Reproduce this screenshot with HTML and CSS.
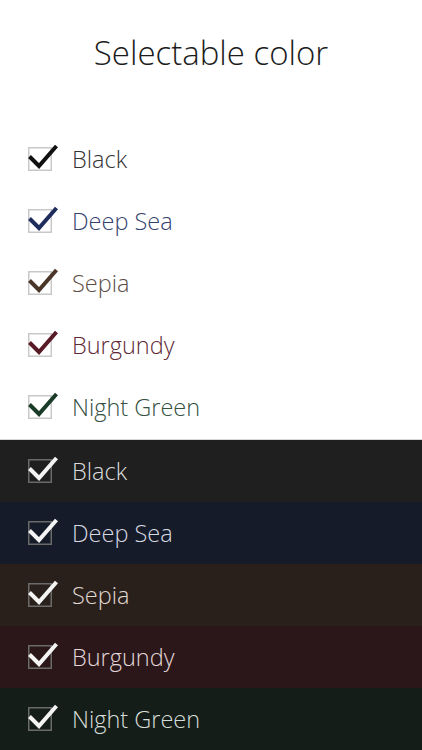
FILE: index.html
```html
<!DOCTYPE html>
<html lang="en">
  <head>
    <meta charset="UTF-8" />
    <meta name="viewport" content="width=device-width, initial-scale=1.0" />
    <title>Selectable color</title>
    <link rel="stylesheet" href="styles.css">
  </head>
  <body>
    <main class="screen">
      <!-- Header -->
      <div class="header">
        <h1>Selectable color</h1>
      </div>

      <!-- Light themes -->
      <ul class="color-list light">
        <li class="row black">
          <svg class="check" viewBox="0 0 30 28" width="30" height="28"><rect x="0.75" y="4.75" width="22.5" height="22.5" /><path d="M1.5 13.5 L11 23 L28.5 3" /></svg>
          <span>Black</span>
        </li>
        <li class="row deep-sea">
          <svg class="check" viewBox="0 0 30 28" width="30" height="28"><rect x="0.75" y="4.75" width="22.5" height="22.5" /><path d="M1.5 13.5 L11 23 L28.5 3" /></svg>
          <span>Deep Sea</span>
        </li>
        <li class="row sepia">
          <svg class="check" viewBox="0 0 30 28" width="30" height="28"><rect x="0.75" y="4.75" width="22.5" height="22.5" /><path d="M1.5 13.5 L11 23 L28.5 3" /></svg>
          <span>Sepia</span>
        </li>
        <li class="row burgundy">
          <svg class="check" viewBox="0 0 30 28" width="30" height="28"><rect x="0.75" y="4.75" width="22.5" height="22.5" /><path d="M1.5 13.5 L11 23 L28.5 3" /></svg>
          <span>Burgundy</span>
        </li>
        <li class="row night-green">
          <svg class="check" viewBox="0 0 30 28" width="30" height="28"><rect x="0.75" y="4.75" width="22.5" height="22.5" /><path d="M1.5 13.5 L11 23 L28.5 3" /></svg>
          <span>Night Green</span>
        </li>
      </ul>

      <!-- Dark themes -->
      <ul class="color-list dark">
        <li class="row black">
          <svg class="check" viewBox="0 0 30 28" width="30" height="28"><rect x="0.75" y="4.75" width="22.5" height="22.5" /><path d="M1.5 13.5 L11 23 L28.5 3" /></svg>
          <span>Black</span>
        </li>
        <li class="row deep-sea">
          <svg class="check" viewBox="0 0 30 28" width="30" height="28"><rect x="0.75" y="4.75" width="22.5" height="22.5" /><path d="M1.5 13.5 L11 23 L28.5 3" /></svg>
          <span>Deep Sea</span>
        </li>
        <li class="row sepia">
          <svg class="check" viewBox="0 0 30 28" width="30" height="28"><rect x="0.75" y="4.75" width="22.5" height="22.5" /><path d="M1.5 13.5 L11 23 L28.5 3" /></svg>
          <span>Sepia</span>
        </li>
        <li class="row burgundy">
          <svg class="check" viewBox="0 0 30 28" width="30" height="28"><rect x="0.75" y="4.75" width="22.5" height="22.5" /><path d="M1.5 13.5 L11 23 L28.5 3" /></svg>
          <span>Burgundy</span>
        </li>
        <li class="row night-green">
          <svg class="check" viewBox="0 0 30 28" width="30" height="28"><rect x="0.75" y="4.75" width="22.5" height="22.5" /><path d="M1.5 13.5 L11 23 L28.5 3" /></svg>
          <span>Night Green</span>
        </li>
      </ul>
    </main>
  </body>
</html>
```
FILE: styles.css
```css
body {
  font-family: "Open Sans", "Noto Sans", sans-serif;
  font-weight: 300;
  background-color: white;
  margin: 0;
  padding: 0;
}

.screen {
  width: 422px;
  height: 750px;
  overflow: hidden;
}

.header {
  height: 128px;
  text-align: center;
}

.header h1 {
  margin: 0;
  padding-top: 31px;
  font-size: 33px;
  font-weight: 300;
  line-height: 44px;
  color: #1c1c1c;
}

.color-list {
  list-style: none;
  margin: 0;
  padding: 0;
}

.row {
  display: flex;
  align-items: center;
  gap: 14px;
  height: 62px;
  padding-left: 28px;
  font-size: 23.5px;
}

.row span {
  margin-top: -1px;
}

.check {
  margin-top: -4px;
}

.check rect {
  fill: none;
  stroke-width: 1.5;
}

.check path {
  fill: none;
  stroke-width: 4;
}

/* Light section */
.light {
  padding-bottom: 1px;
  border-bottom: 1px solid #d6d6d6;
}

.light .check rect {
  stroke: #c9c9c9;
}

.light .black { color: #333333; }
.light .black path { stroke: #111111; }

.light .deep-sea { color: #34426e; }
.light .deep-sea path { stroke: #1f2d5c; }

.light .sepia { color: #5c4e46; }
.light .sepia path { stroke: #4a3629; }

.light .burgundy { color: #5e2a36; }
.light .burgundy path { stroke: #591a27; }

.light .night-green { color: #34503f; }
.light .night-green path { stroke: #1a3b28; }

/* Dark section */
.dark .check rect {
  stroke: #6a6a6a;
}

.dark .check path {
  stroke: #f4f4f4;
}

.dark .row {
  color: #dcdcdc;
}

.dark .black { background-color: #1f1f1f; }
.dark .deep-sea { background-color: #161b29; color: #d6d9e2; }
.dark .sepia { background-color: #2a201b; color: #e0d8d2; }
.dark .burgundy { background-color: #2b1619; color: #e2d6d8; }
.dark .night-green { background-color: #151d18; color: #d6ddd8; }
```
